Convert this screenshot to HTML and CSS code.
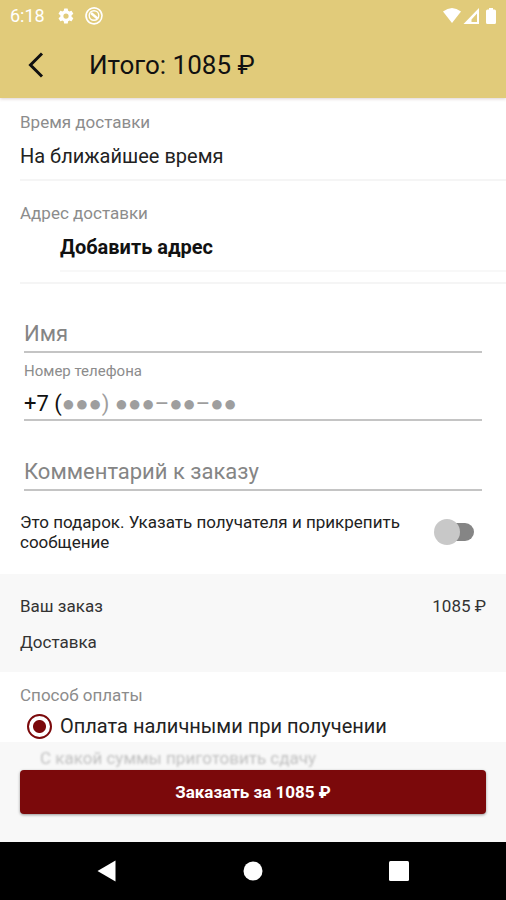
FILE: index.html
```html
<!DOCTYPE html>
<html lang="ru">
<head>
<meta charset="utf-8">
<meta name="viewport" content="width=device-width, initial-scale=1">
<title>Оформление заказа</title>
<link rel="stylesheet" href="styles.css">
</head>
<body>
<header class="top">
  <div class="status">
    <span class="clock">6:18</span>
    <svg class="status-gear" viewBox="0 0 24 24" width="18" height="18" aria-hidden="true"><path fill="currentColor" fill-rule="evenodd" d="M19.4 13a7.500 7.500 0 0 0 0-2l2.100-1.600a.5.5 0 0 0 .1-.6l-2-3.500a.5.5 0 0 0-.6-.2l-2.500 1a7.300 7.300 0 0 0-1.700-1l-.4-2.600a.5.5 0 0 0-.5-.4h-4a.5.5 0 0 0-.5.4L9 5.100a7.300 7.300 0 0 0-1.700 1l-2.500-1a.5.5 0 0 0-.6.2l-2 3.500a.5.5 0 0 0 .1.600L4.500 11a7.500 7.500 0 0 0 0 2l-2.200 1.600a.5.5 0 0 0-.1.600l2 3.500c.1.200.4.300.6.200l2.500-1a7.300 7.300 0 0 0 1.700 1l.4 2.600c0 .2.200.4.500.4h4c.3 0 .5-.2.500-.4l.4-2.600a7.300 7.300 0 0 0 1.700-1l2.500 1c.2.100.5 0 .6-.2l2-3.500a.5.5 0 0 0-.1-.6ZM12 15.500a3.500 3.500 0 1 1 0-7 3.500 3.500 0 0 1 0 7Z"/></svg>
    <svg viewBox="0 0 20 20" width="20" height="20" fill="none" stroke="currentColor" aria-hidden="true"><path stroke-width="1.600" d="M15.500 15.700A8 8 0 1 1 18 9.500q0 3.500-2.500 6.200"/><circle cx="10" cy="9.500" r="4.800" stroke-width="1.400"/><path stroke-width="2.400" d="M7 7l6.500 5.500"/></svg>
    <svg class="status-right" viewBox="0 0 56 18" width="56" height="18" fill="currentColor" aria-hidden="true"><path d="M1 4.500Q10-2.500 19 4.500L10 16Z"/><path fill-rule="evenodd" d="M37 1v16H21.500ZM35 6.500L29.500 12.500V15H35Z"/><path d="M47 2.500V1h4v1.500h1.500q1.500 0 1.500 1.500v11.500q0 1.500-1.500 1.500h-7q-1.500 0-1.500-1.500V4q0-1.500 1.500-1.500Z"/></svg>
  </div>
  <div class="toolbar">
    <button class="back" type="button" aria-label="Назад"><svg viewBox="0 0 16 26" width="16" height="26" fill="none" stroke="currentColor" stroke-width="3" aria-hidden="true"><path d="M14 1.500L2.500 13 14 24.500"/></svg></button>
    <h1 class="title">Итого: 1085 ₽</h1>
  </div>
</header>
<form class="order">
  <section class="block">
    <h2 class="caption">Время доставки</h2>
    <button class="choice" type="button">На ближайшее время</button>
  </section>
  <section class="block block-address">
    <h2 class="caption">Адрес доставки</h2>
    <button class="choice choice-add" type="button">Добавить адрес</button>
  </section>
  <div class="fields">
    <input class="field" type="text" placeholder="Имя" aria-label="Имя">
    <label class="phone-label" for="phone">Номер телефона</label>
    <div class="field phone"><span>+7 (</span><input class="phone-input" id="phone" type="tel" placeholder="●●●) ●●●–●●–●●"></div>
    <input class="field field-comment" type="text" placeholder="Комментарий к заказу" aria-label="Комментарий к заказу">
  </div>
  <div class="gift">
    <label class="gift-label" for="gift">Это подарок. Указать получателя и прикрепить сообщение</label>
    <input class="switch" id="gift" type="checkbox" role="switch">
  </div>
  <dl class="summary">
    <div class="summary-row"><dt>Ваш заказ</dt><dd>1085 ₽</dd></div>
    <div class="summary-row"><dt>Доставка</dt><dd></dd></div>
  </dl>
  <section class="payment">
    <h2 class="caption">Способ оплаты</h2>
    <label class="option"><input class="radio" type="radio" name="payment" checked>Оплата наличными при получении</label>
  </section>
  <div class="checkout">
    <p class="change">С какой суммы приготовить сдачу</p>
    <button class="submit" type="submit">Заказать за 1085 ₽</button>
  </div>
</form>
<nav class="system">
  <button class="key" type="button" aria-label="Назад"><svg viewBox="0 0 22 22" width="22" height="22" fill="currentColor" aria-hidden="true"><path d="M19.500 0.500v21L1.500 11Z"/></svg></button>
  <button class="key" type="button" aria-label="Домой"><svg viewBox="0 0 22 22" width="22" height="22" fill="currentColor" aria-hidden="true"><circle cx="11" cy="11" r="9.500"/></svg></button>
  <button class="key" type="button" aria-label="Недавние"><svg viewBox="0 0 22 22" width="22" height="22" fill="currentColor" aria-hidden="true"><rect x="1" y="1" width="20" height="20" rx="1.500"/></svg></button>
</nav>
</body>
</html>
```
FILE: styles.css
```css
* { box-sizing: border-box; }
body {
  margin: 0;
  min-height: 100vh;
  display: flex;
  flex-direction: column;
  background: #fff;
  color: #222;
  font-family: Roboto, "Liberation Sans", sans-serif;
  font-size: 17px;
  line-height: 20px;
}
button, input { font: inherit; color: inherit; }
button { border: 0; padding: 0; background: none; cursor: pointer; }
h1, h2, p, dl, dd { margin: 0; font-weight: 400; }
svg { display: block; }

.top { background: #e1cb7a; box-shadow: 0 1px 3px rgba(120, 80, 80, .25); }
.status {
  display: flex;
  align-items: center;
  height: 32px;
  padding: 0 8px 0 10px;
  color: #fff;
}
.clock { font-size: 18px; }
.status-gear { margin: 0 9px 0 12px; }
.status-right { margin-left: auto; }
.toolbar { display: flex; align-items: center; height: 66px; padding-left: 28px; color: #111; }
.back { width: 61px; }
.title { font-size: 26px; line-height: 28px; font-weight: 400; }

.order { flex: 1; display: flex; flex-direction: column; }
.caption { color: #8c8c8c; font-size: 17px; line-height: 20px; }
.block {
  margin-left: 20px;
  padding-top: 14px;
  border-bottom: 2px solid #f5f5f5;
}
.choice {
  display: block;
  width: 100%;
  margin-top: 12px;
  padding-bottom: 11px;
  text-align: left;
  font-size: 20px;
  line-height: 24px;
}
.block-address { padding: 22px 0 10px; }
.choice-add {
  width: auto;
  min-width: calc(100% - 40px);
  margin-left: 40px;
  border-bottom: 2px solid #f8f8f8;
  color: #111;
  font-weight: 700;
}

.fields { display: flex; flex-direction: column; padding: 31px 24px 0; }
.field {
  width: 100%;
  height: 38px;
  padding: 0;
  border: 0;
  border-bottom: 2px solid #c4c4c4;
  outline: 0;
  background: none;
  font-size: 22px;
  line-height: 26px;
}
.field::placeholder { color: #858585; opacity: 1; }
.phone-label { margin-top: 8px; color: #8c8c8c; font-size: 15px; line-height: 20px; }
.phone { display: flex; align-items: center; height: 40px; padding-top: 8px; color: #111; }
.phone-input { flex: 1; min-width: 0; padding: 0; border: 0; outline: 0; background: none; }
.phone-input::placeholder { color: #9e9e9e; opacity: 1; }
.field-comment { margin-top: 32px; }

.gift { display: flex; align-items: center; padding: 21px 32px 22px 20px; }
.gift-label { flex: 1; padding-right: 20px; }
.switch {
  appearance: none;
  display: flex;
  align-items: center;
  width: 34px;
  height: 18px;
  margin: 0 0 0 6px;
  border-radius: 9px;
  background: #858585;
}
.switch::before {
  content: "";
  flex: none;
  width: 26px;
  height: 26px;
  margin-left: -6px;
  border-radius: 50%;
  background: #c8c8c8;
}
.switch:checked::before { margin-left: 14px; }

.summary { display: grid; gap: 16px; padding: 22px 20px 20px; background: #f8f8f8; color: #333; }
.summary-row { display: flex; justify-content: space-between; }

.payment { padding: 13px 20px 3px; }
.option { display: flex; align-items: center; margin-top: 8px; padding-left: 7px; font-size: 20px; line-height: 26px; }
.radio {
  appearance: none;
  width: 25px;
  height: 25px;
  margin: 0 8px 0 0;
  border: 2px solid #7b090b;
  border-radius: 50%;
  background: radial-gradient(circle, #7b090b 6px, transparent 7px);
}

.checkout { flex: 1; padding: 5px 20px 27px; background: #f8f8f8; }
.change { padding-left: 20px; color: #c0c0c0; filter: blur(1px); line-height: 23px; }
.submit {
  display: block;
  width: 100%;
  height: 44px;
  border-radius: 4px;
  background: #7b090b;
  box-shadow: 0 1px 3px rgba(0, 0, 0, .4);
  color: #fff;
  font-weight: 700;
}

.system {
  display: flex;
  justify-content: center;
  gap: 124px;
  padding: 18px 0;
  background: #000;
  color: #fff;
}
```
